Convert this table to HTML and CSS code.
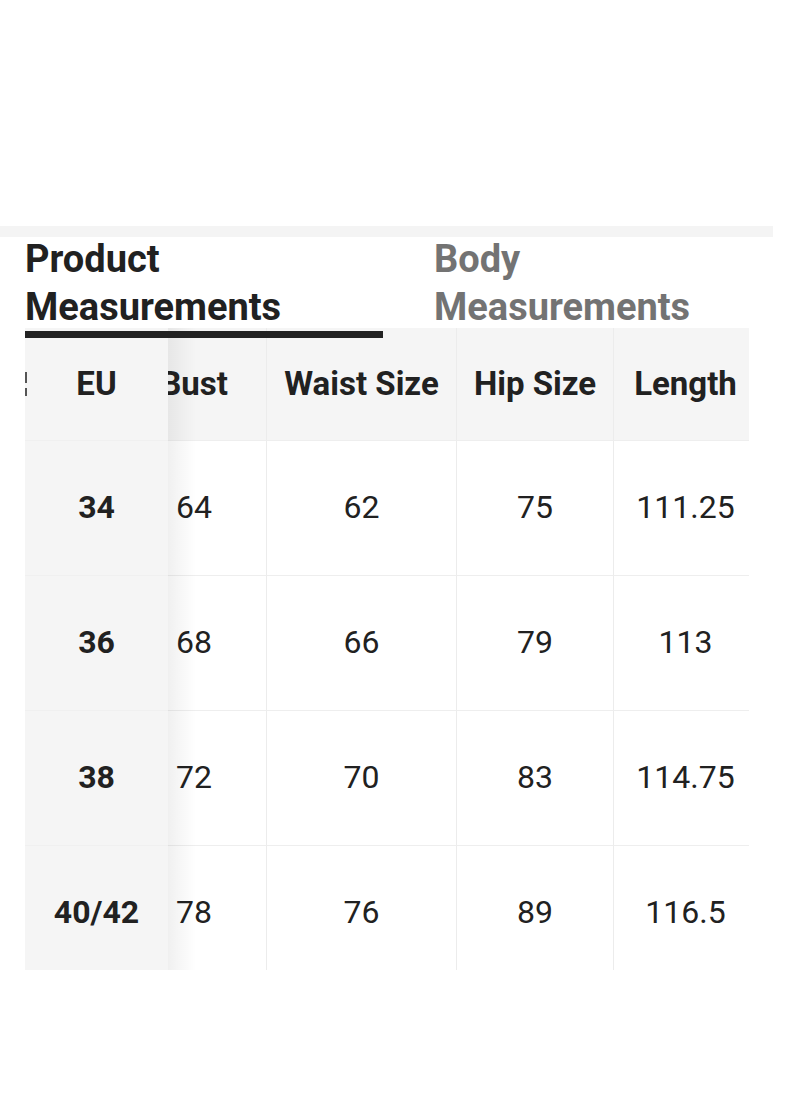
FILE: index.html
```html
<!DOCTYPE html>
<html lang="en">
<head>
<meta charset="utf-8">
<title>Size Guide</title>
<link rel="stylesheet" href="styles.css">
</head>
<body>
<div class="page">
  <div class="top-strip"></div>
  <div class="tabs">
    <div class="tab tab-active">Product Measurements</div>
    <div class="tab tab-inactive">Body Measurements</div>
  </div>
  <div class="table">
    <div class="fixed-col">
      <div class="cell head"><span class="clip-mark"></span>EU</div>
      <div class="cell body-cell">34</div>
      <div class="cell body-cell">36</div>
      <div class="cell body-cell">38</div>
      <div class="cell body-cell">40/42</div>
    </div>
    <div class="scroll-area">
      <div class="grid">
        <div class="cell head c-bust">Bust</div>
        <div class="cell head c-sep">Waist Size</div>
        <div class="cell head c-sep">Hip Size</div>
        <div class="cell head c-sep c-len">Length</div>

        <div class="cell data">64</div>
        <div class="cell data c-sep">62</div>
        <div class="cell data c-sep">75</div>
        <div class="cell data c-sep c-len">111.25</div>

        <div class="cell data">68</div>
        <div class="cell data c-sep">66</div>
        <div class="cell data c-sep">79</div>
        <div class="cell data c-sep c-len">113</div>

        <div class="cell data">72</div>
        <div class="cell data c-sep">70</div>
        <div class="cell data c-sep">83</div>
        <div class="cell data c-sep c-len">114.75</div>

        <div class="cell data">78</div>
        <div class="cell data c-sep">76</div>
        <div class="cell data c-sep">89</div>
        <div class="cell data c-sep c-len">116.5</div>
      </div>
    </div>
  </div>
</div>
</body>
</html>
```

FILE: styles.css
```css
* { box-sizing: border-box; }

html, body {
  margin: 0;
  padding: 0;
  background: #ffffff;
}

body {
  font-family: Roboto, "Noto Sans", "Liberation Sans", sans-serif;
  color: #212121;
}

.page {
  width: 800px;
  height: 1096px;
  padding-top: 226px;
}

.top-strip {
  width: 773px;
  height: 11px;
  background: #f4f4f4;
}

.tabs {
  display: flex;
  height: 91px;
  padding-left: 25px;
}

.tab {
  font-size: 38px;
  font-weight: 700;
  line-height: 48px;
  margin-top: -2px;
}

.tab-active {
  position: relative;
  width: 358px;
  color: #212121;
}

.tab-active::after {
  content: "";
  position: absolute;
  left: 0;
  top: 96px;
  width: 358px;
  height: 7px;
  background: #222222;
  z-index: 3;
}

.tab-inactive {
  width: 300px;
  margin-left: 51px;
  color: #737373;
}

.table {
  display: flex;
  margin-left: 25px;
  width: 724px;
  height: 642px;
  overflow: hidden;
}

.fixed-col {
  position: relative;
  width: 143px;
  flex: none;
  background: #f5f5f5;
  z-index: 2;
}

.fixed-col::after {
  content: "";
  position: absolute;
  top: 0;
  left: 100%;
  width: 28px;
  height: 100%;
  background: linear-gradient(to right, rgba(0, 0, 0, 0.06), rgba(0, 0, 0, 0));
}

.cell {
  display: flex;
  align-items: center;
  justify-content: center;
  font-size: 32px;
  height: 135px;
  padding-bottom: 3px;
}

.cell.head {
  height: 112px;
  font-size: 33px;
  font-weight: 700;
  background: #f5f5f5;
  padding-bottom: 2px;
}

.fixed-col .cell.head {
  position: relative;
}

.clip-mark {
  position: absolute;
  left: 0;
  top: 44px;
  width: 2px;
  height: 24px;
  background: linear-gradient(to bottom, #555 0, #555 11px, transparent 11px, transparent 16px, #555 16px, #555 24px);
}

.body-cell {
  font-weight: 700;
  border-top: 1px solid #f0f0f0;
}

.scroll-area {
  flex: 1;
  overflow: hidden;
}

.grid {
  display: grid;
  grid-template-columns: 144px 190px 157px 136px;
  margin-left: -46px;
}

.data {
  border-top: 1px solid #eeeeee;
  font-weight: 400;
}

.c-sep {
  border-left: 1px solid #ececec;
}

.c-len {
  padding-left: 8px;
}
```
